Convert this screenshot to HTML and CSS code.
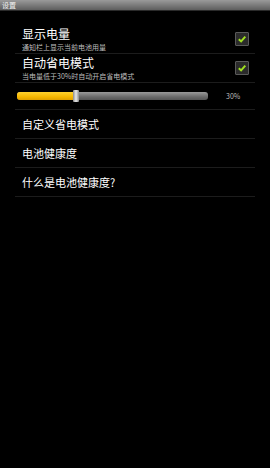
FILE: index.html
```html
<!DOCTYPE html>
<html lang="zh">
<head>
  <meta charset="UTF-8">
  <title>设置</title>
  <link rel="stylesheet" href="styles.css">
</head>
<body>
  <!-- 标题栏 -->
  <div class="titlebar">设置</div>

  <div class="list">
    <div class="row two-line">
      <div class="text">
        <div class="title">显示电量</div>
        <div class="summary">通知栏上显示当前电池用量</div>
      </div>
      <div class="check">
        <svg viewBox="0 0 10 10"><path d="M1.8 5.2 L4.1 7.4 L8.3 2.6" fill="none" stroke="#a0e020" stroke-width="2"/></svg>
      </div>
    </div>

    <div class="row two-line">
      <div class="text">
        <div class="title">自动省电模式</div>
        <div class="summary">当电量低于30%时自动开启省电模式</div>
      </div>
      <div class="check">
        <svg viewBox="0 0 10 10"><path d="M1.8 5.2 L4.1 7.4 L8.3 2.6" fill="none" stroke="#a0e020" stroke-width="2"/></svg>
      </div>
    </div>

    <div class="row slider-row">
      <div class="slider">
        <div class="fill" style="width: 30%"></div>
        <div class="thumb"></div>
      </div>
      <div class="value">30%</div>
    </div>

    <div class="row single">自定义省电模式</div>
    <div class="row single">电池健康度</div>
    <div class="row single">什么是电池健康度?</div>
  </div>
</body>
</html>
```

FILE: styles.css
```css
* {
  margin: 0;
  padding: 0;
  box-sizing: border-box;
}

body {
  width: 270px;
  height: 468px;
  background: #000;
  overflow: hidden;
  font-family: "Noto Sans CJK SC", "DejaVu Sans", sans-serif;
  color: #fff;
}

.titlebar {
  height: 11px;
  background: linear-gradient(#9a9a9a, #5e5e5e);
  border-bottom: 1px solid #2a2a2a;
  font-size: 7px;
  line-height: 10px;
  padding-left: 2px;
  color: #f2f2f2;
}

.list {
  padding: 14px 15px 0 15px;
}

.row {
  border-bottom: 1px solid #1c1c1c;
  display: flex;
  align-items: center;
}

.two-line {
  height: 29px;
  padding: 0 6px 0 7px;
  justify-content: space-between;
}

.title {
  font-size: 12px;
  line-height: 16px;
}

.summary {
  font-size: 7px;
  line-height: 10px;
  color: #bdbdbd;
}

.check {
  width: 14px;
  height: 14px;
  border: 1px solid #5a5a5a;
  background: #2b2b2b;
  border-radius: 1px;
  display: flex;
  align-items: center;
  justify-content: center;
}

.check svg {
  width: 10px;
  height: 10px;
}

.slider-row {
  height: 27px;
  padding: 0 0 0 2px;
}

.slider {
  position: relative;
  width: 191px;
  height: 8px;
  border-radius: 3px;
  background: linear-gradient(#9a9a9a, #6a6a6a 60%, #555);
}

.fill {
  height: 100%;
  border-radius: 3px 0 0 3px;
  background: linear-gradient(#ffd230, #f7b800 60%, #e0a000);
}

.thumb {
  position: absolute;
  left: 56px;
  top: -2px;
  width: 6px;
  height: 12px;
  border-radius: 1px;
  background: linear-gradient(90deg, #8a8a8a, #e8e8e8 50%, #8a8a8a);
}

.value {
  margin-left: 18px;
  font-size: 7px;
  color: #bdbdbd;
}

.single {
  height: 29px;
  padding-left: 7px;
  font-size: 11px;
}
```
